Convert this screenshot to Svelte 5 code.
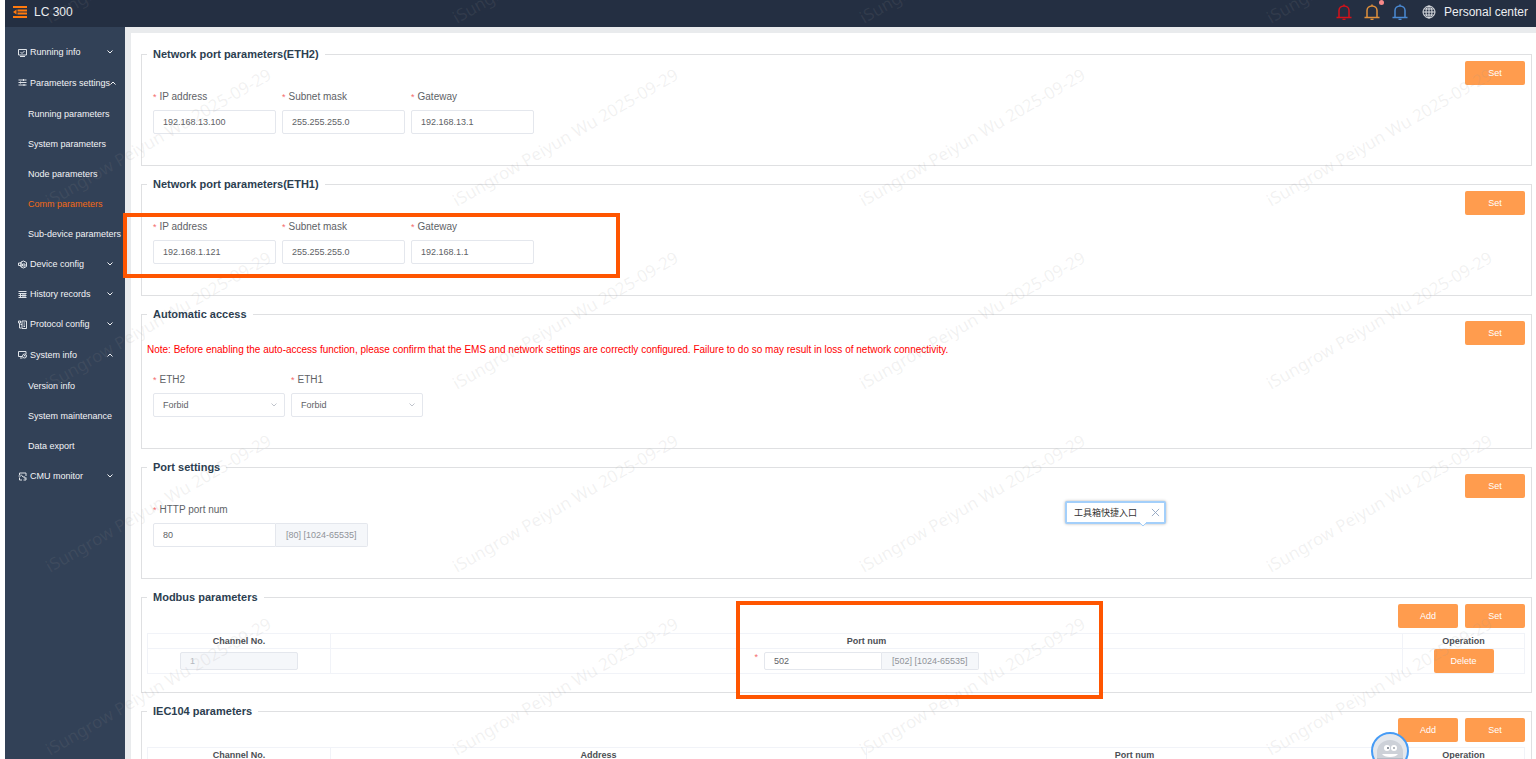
<script lang="ts">
	type Field = { id: string; label: string; value: string; hint?: string };
	type MenuItem = { label: string; icon: string; open?: boolean; children?: string[] };

	const ACTIVE = 'Comm parameters';

	const menu: MenuItem[] = [
		{ label: 'Running info', icon: 'monitor' },
		{
			label: 'Parameters settings',
			icon: 'sliders',
			open: true,
			children: [
				'Running parameters',
				'System parameters',
				'Node parameters',
				'Comm parameters',
				'Sub-device parameters',
			],
		},
		{ label: 'Device config', icon: 'device' },
		{ label: 'History records', icon: 'table' },
		{ label: 'Protocol config', icon: 'protocol' },
		{
			label: 'System info',
			icon: 'system',
			open: true,
			children: ['Version info', 'System maintenance', 'Data export'],
		},
		{ label: 'CMU monitor', icon: 'cmu' },
	];

	const bells = [
		{ name: 'Critical alarms', color: '#d4121a', dot: false },
		{ name: 'Minor alarms', color: '#e0913c', dot: true },
		{ name: 'Notices', color: '#4a8ad4', dot: false },
	];

	let eth2 = $state<Field[]>([
		{ id: 'eth2-ip', label: 'IP address', value: '192.168.13.100' },
		{ id: 'eth2-mask', label: 'Subnet mask', value: '255.255.255.0' },
		{ id: 'eth2-gw', label: 'Gateway', value: '192.168.13.1' },
	]);
	let eth1 = $state<Field[]>([
		{ id: 'eth1-ip', label: 'IP address', value: '192.168.1.121' },
		{ id: 'eth1-mask', label: 'Subnet mask', value: '255.255.255.0' },
		{ id: 'eth1-gw', label: 'Gateway', value: '192.168.1.1' },
	]);
	let http = $state<Field[]>([
		{ id: 'http-port', label: 'HTTP port num', value: '80', hint: '[80] [1024-65535]' },
	]);
	let modbusPort = $state('502');
	let tipOpen = $state(true);

	// Watermark grid
	const MARK = 'iSungrow Peiyun Wu 2025-09-29';
	const marks = [0, 1, 2, 3, 4].flatMap((r) =>
		[0, 1, 2, 3].map((c) => ({ x: 50 + c * 407, y: 24 + r * 183 })),
	);
</script>

{#snippet menuIcon(name: string)}
	<svg class="menu-icon" viewBox="0 0 18 18" aria-hidden="true">
		{#if name === 'monitor'}
			<path d="M1 3h16v11H1zM4 17h10M5 8l3 3 5-5" />
		{:else if name === 'sliders'}
			<path d="M1 4h16M1 9h16M1 14h16M11 2v4M5 7v4M12 12v4" />
		{:else if name === 'device'}
			<path d="M6 4l5-2 6 3v8l-6 3-5-2zM6 4v10M1 6h5M1 11h5M1 6v5M9 8h5v4H9z" />
		{:else if name === 'table'}
			<path d="M1 3h16M1 7h16M1 11h16M1 15h16M5 7v8M10 7v8M14 7v8" />
		{:else if name === 'protocol'}
			<path d="M8 2h9v15H8zM11 6h3M11 10h3M11 13h3M1 2h4v4H1zM3 6v10M3 16h4M5 9h3" />
		{:else if name === 'system'}
			<path d="M16 8V3H1v10h7M4 16h5" />
			<circle cx="13" cy="12" r="4" />
			<path d="M13 10v2h2" />
		{:else}
			<path d="M3 6V2h13v6M3 11v5h5M1 8h5M6 5l4 5M16 11v5h-5M10 10h4v4" />
		{/if}
	</svg>
{/snippet}

{#snippet chevron(up: boolean)}
	<svg class="chevron" class:up viewBox="0 0 12 8" aria-hidden="true">
		<path d="M1 1l5 5 5-5" />
	</svg>
{/snippet}

{#snippet actions(names: string[])}
	<div class="actions">
		{#each names as name}
			<button type="button" class="btn">{name}</button>
		{/each}
	</div>
{/snippet}

{#snippet fieldRow(fields: Field[])}
	<div class="row">
		{#each fields as field (field.id)}
			<div class="field">
				<label for={field.id}><span class="req">*</span>{field.label}</label>
				<div class="group">
					<input id={field.id} type="text" class:joined={field.hint} bind:value={field.value} />
					{#if field.hint}<span class="hint">{field.hint}</span>{/if}
				</div>
			</div>
		{/each}
	</div>
{/snippet}

<div class="page">
	<header>
		<button type="button" class="fold" aria-label="Collapse menu">
			<svg viewBox="0 0 28 24" aria-hidden="true">
				<path d="M0 2h28M9 9h19M9 15h19M0 22h28" />
				<path class="solid" d="M0 12l7-5v10z" />
			</svg>
		</button>
		<h1>LC 300</h1>
		<div class="tools">
			{#each bells as bell}
				<button type="button" class="bell" aria-label={bell.name}>
					<svg viewBox="0 0 32 32" style:stroke={bell.color} aria-hidden="true">
						<path d="M1 27h30M6 27V13c0-5 4-9 10-9s10 4 10 9v14M16 4V1M13 31h6" />
					</svg>
					{#if bell.dot}<span class="dot"></span>{/if}
				</button>
			{/each}
			<svg class="globe" viewBox="0 0 28 28" aria-hidden="true">
				<circle cx="14" cy="14" r="12" />
				<ellipse cx="14" cy="14" rx="6" ry="12" />
				<path d="M2 14h24M14 2v24M4 8h20M4 20h20" />
			</svg>
			<a href="#personal">Personal center</a>
		</div>
	</header>

	<div class="body">
		<nav>
			<ul>
				{#each menu as item}
					<li>
						<button type="button" class="menu-item" class:open={item.open}>
							{@render menuIcon(item.icon)}
							<span>{item.label}</span>
							{@render chevron(!!item.open)}
						</button>
						{#if item.open && item.children}
							<ul class="submenu">
								{#each item.children as child}
									<li><a href="#menu" class="sub" class:active={child === ACTIVE}>{child}</a></li>
								{/each}
							</ul>
						{/if}
					</li>
				{/each}
			</ul>
		</nav>

		<main>
			<div class="panel">
				<fieldset>
					<legend>Network port parameters(ETH2)</legend>
					{@render actions(['Set'])}
					{@render fieldRow(eth2)}
				</fieldset>

				<fieldset>
					<legend>Network port parameters(ETH1)</legend>
					{@render actions(['Set'])}
					{@render fieldRow(eth1)}
				</fieldset>

				<fieldset>
					<legend>Automatic access</legend>
					{@render actions(['Set'])}
					<p class="note">
						Note: Before enabling the auto-access function, please confirm that the EMS and network
						settings are correctly configured. Failure to do so may result in loss of network
						connectivity.
					</p>
					<div class="row">
						{#each ['ETH2', 'ETH1'] as port}
							<div class="field">
								<label for="auto-{port}"><span class="req">*</span>{port}</label>
								<div class="select">
									<select id="auto-{port}">
										<option>Forbid</option>
										<option>Allow</option>
									</select>
									{@render chevron(false)}
								</div>
							</div>
						{/each}
					</div>
				</fieldset>

				<fieldset>
					<legend>Port settings</legend>
					{@render actions(['Set'])}
					{@render fieldRow(http)}
				</fieldset>

				<fieldset class="with-table">
					<legend>Modbus parameters</legend>
					{@render actions(['Add', 'Set'])}
					<table>
						<thead>
							<tr>
								<th class="channel">Channel No.</th>
								<th>Port num</th>
								<th class="operation">Operation</th>
							</tr>
						</thead>
						<tbody>
							<tr>
								<td><input type="text" class="small" value="1" aria-label="Channel No." disabled /></td>
								<td>
									<div class="group centered">
										<span class="req">*</span>
										<input
											type="text"
											class="small joined"
											aria-label="Port num"
											bind:value={modbusPort}
										/>
										<span class="hint small">[502] [1024-65535]</span>
									</div>
								</td>
								<td><button type="button" class="btn">Delete</button></td>
							</tr>
						</tbody>
					</table>
				</fieldset>

				<fieldset class="with-table">
					<legend>IEC104 parameters</legend>
					{@render actions(['Add', 'Set'])}
					<table>
						<thead>
							<tr>
								<th class="channel">Channel No.</th>
								<th>Address</th>
								<th>Port num</th>
								<th class="operation">Operation</th>
							</tr>
						</thead>
					</table>
				</fieldset>
			</div>
		</main>
	</div>

	<svg class="watermark" aria-hidden="true">
		{#each marks as m}
			<text transform="translate({m.x} {m.y}) rotate(-30)">{MARK}</text>
		{/each}
	</svg>

	<div class="frame frame-eth1"></div>
	<div class="frame frame-modbus"></div>

	{#if tipOpen}
		<div class="tip">
			<span>工具箱快捷入口</span>
			<button type="button" aria-label="Close" onclick={() => (tipOpen = false)}>
				<svg viewBox="0 0 10 10" aria-hidden="true"><path d="M1 1l8 8M9 1l-8 8" /></svg>
			</button>
			<svg class="tip-arrow" viewBox="0 0 8 5" aria-hidden="true"><path d="M0 0l4 4 4-4" /></svg>
		</div>
	{/if}

	<button type="button" class="robot" aria-label="Assistant">
		<svg viewBox="0 0 38 38" aria-hidden="true">
			<circle cx="19" cy="19" r="18" fill="#e4e7ec" stroke="#469bf5" stroke-width="2" />
			<path d="M6 29V20a13 12 0 0 1 26 0v9z" fill="#cdd1d8" />
			<path d="M6 26h26v4a16 16 0 0 1-26 0z" fill="#b3bbc6" />
			<circle cx="16" cy="16" r="3" fill="#fff" />
			<circle cx="23" cy="16" r="3" fill="#fff" />
			<circle cx="17" cy="16" r="1" fill="#6d7480" />
			<path d="M22 16h2" stroke="#6d7480" />
			<path d="M11 22h16q-2 3-8 3t-8-3z" fill="#fff" />
		</svg>
	</button>
</div>

<style>
	:global(body) {
		background: #fff;
	}

	.page {
		position: relative;
		display: flex;
		flex-direction: column;
		height: 100vh;
		padding-left: 5px;
		box-sizing: border-box;
		overflow: hidden;
		font-family: 'Liberation Sans', Arial, 'Noto Sans CJK SC', sans-serif;
		font-size: 9px;
		color: #606266;
	}

	button,
	input,
	select {
		font: inherit;
		box-sizing: border-box;
		margin: 0;
	}

	button {
		border: 0;
		padding: 0;
		background: none;
		color: inherit;
		cursor: pointer;
	}

	a {
		color: inherit;
		text-decoration: none;
	}

	ul {
		list-style: none;
		margin: 0;
		padding: 0;
	}

	svg {
		display: block;
		fill: none;
	}

	header {
		flex: none;
		display: flex;
		align-items: center;
		height: 27px;
		box-sizing: border-box;
		padding: 0 8px 3px;
		background: #242f42;
		color: #eceef1;
		font-size: 12px;
	}

	.fold svg {
		width: 14px;
		height: 12px;
		stroke: #ff7a0e;
		stroke-width: 4;
	}

	.fold .solid {
		fill: #ff7a0e;
		stroke: none;
	}

	h1 {
		margin: 0 0 0 7px;
		font-size: 12px;
		font-weight: 400;
	}

	.tools {
		display: flex;
		align-items: center;
		margin-left: auto;
	}

	.bell {
		position: relative;
		margin-right: 12px;
	}

	.bell svg {
		width: 16px;
		height: 16px;
		stroke-width: 3;
	}

	.dot {
		position: absolute;
		top: -4px;
		right: -4px;
		width: 5px;
		height: 5px;
		border-radius: 50%;
		background: #f78989;
	}

	.globe {
		width: 14px;
		height: 14px;
		margin: 0 8px 0 2px;
		stroke: #dfe2e6;
		stroke-width: 2;
	}

	.body {
		flex: 1;
		display: flex;
		min-height: 0;
	}

	nav {
		flex: none;
		width: 120px;
		padding-top: 10px;
		background: #324157;
		color: #f2f4f6;
	}

	.menu-item {
		display: flex;
		align-items: center;
		width: 100%;
		height: 30px;
		padding: 0 12px 0 13px;
		white-space: nowrap;
	}

	.menu-item.open {
		height: 31px;
	}

	.submenu {
		padding-top: 1px;
	}

	.menu-icon {
		flex: none;
		width: 9px;
		height: 9px;
		margin-right: 3px;
		stroke: #dfe3e8;
		stroke-width: 2;
	}

	.chevron {
		flex: none;
		width: 6px;
		height: 4px;
		margin-left: auto;
		stroke: currentColor;
		stroke-width: 2;
	}

	.chevron.up {
		transform: rotate(180deg);
	}

	.sub {
		display: block;
		padding-left: 23px;
		line-height: 30px;
		white-space: nowrap;
	}

	.sub.active {
		color: #f56a14;
	}

	main {
		flex: 1;
		min-width: 0;
		padding: 6px 0 0 6px;
		background: #e9ebed;
	}

	.panel {
		display: flex;
		flex-direction: column;
		gap: 11px;
		padding: 14px 4px 0 10px;
		background: #fff;
	}

	fieldset {
		min-width: 0;
		margin: 0;
		padding: 0 6px 31px 5px;
		border: 1px solid #dfe0e2;
	}

	.with-table {
		padding-bottom: 18px;
	}

	legend {
		padding: 0 6px;
		font-size: 11px;
		line-height: 14px;
		font-weight: 700;
		color: #2c3e50;
	}

	.actions {
		display: flex;
		justify-content: flex-end;
		gap: 7px;
	}

	.btn {
		width: 60px;
		height: 24px;
		border-radius: 2px;
		background: #ff9c4e;
		color: #fff;
	}

	.row {
		display: flex;
		gap: 6px;
		padding: 5px 6px 0;
	}

	.field {
		display: flex;
		flex-direction: column;
		gap: 6px;
	}

	label {
		font-size: 10px;
		line-height: 14px;
	}

	.req {
		margin-right: 3px;
		font-size: 9px;
		color: #f56c6c;
	}

	.group {
		display: flex;
	}

	input,
	select {
		width: 123px;
		height: 24px;
		padding: 0 9px;
		border: 1px solid #e4e7ed;
		border-radius: 2px;
		background: #fff;
		color: #606266;
	}

	input.joined {
		border-radius: 2px 0 0 2px;
	}

	.hint {
		box-sizing: border-box;
		height: 24px;
		padding: 0 10px;
		border: 1px solid #e4e7ed;
		border-left: 0;
		border-radius: 0 2px 2px 0;
		background: #f5f7fa;
		color: #909399;
		line-height: 22px;
		white-space: nowrap;
	}

	input.small {
		width: 118px;
		height: 18px;
	}

	.hint.small {
		height: 18px;
		line-height: 16px;
	}

	input:disabled {
		background: #f5f7fa;
		color: #b4b8bf;
	}

	.select {
		display: grid;
		align-items: center;
	}

	.select > :global(*) {
		grid-area: 1 / 1;
	}

	select {
		appearance: none;
		width: 132px;
	}

	.select .chevron {
		margin-right: 8px;
		stroke: #c0c4cc;
		pointer-events: none;
	}

	.note {
		margin: 0 0 13px;
		font-size: 10px;
		line-height: 10px;
		color: #f00;
	}

	table {
		width: 100%;
		margin-top: 5px;
		border-collapse: collapse;
		table-layout: fixed;
	}

	th,
	td {
		height: 24px;
		padding: 0;
		border: 1px solid #f1f3f8;
		text-align: center;
		vertical-align: middle;
	}

	th {
		height: 14px;
		line-height: 14px;
		color: #4c4f54;
	}

	.channel {
		width: 182px;
	}

	.operation {
		width: 121px;
	}

	td .btn {
		display: block;
		margin: 0 auto;
	}

	.centered {
		justify-content: center;
	}

	.centered .req {
		margin-right: 6px;
	}

	.watermark {
		position: absolute;
		inset: 0;
		width: 100%;
		height: 100%;
		pointer-events: none;
	}

	.watermark text {
		font-family: 'Noto Sans', sans-serif;
		font-size: 17px;
		fill: rgba(150, 150, 150, 0.13);
	}

	.frame {
		position: absolute;
		box-sizing: border-box;
		border: 4px solid #ff5500;
		pointer-events: none;
	}

	.frame-eth1 {
		top: 213px;
		left: 123px;
		width: 497px;
		height: 65px;
	}

	.frame-modbus {
		top: 601px;
		left: 736px;
		width: 367px;
		height: 98px;
	}

	.tip {
		position: absolute;
		top: 501px;
		right: 370px;
		display: flex;
		align-items: center;
		justify-content: space-between;
		width: 101px;
		height: 23px;
		box-sizing: border-box;
		padding: 0 4px 0 7px;
		border: 2px solid #a3cffa;
		border-radius: 2px;
		background: #fff;
		box-shadow: 0 0 3px rgba(0, 0, 0, 0.3);
		color: #333;
	}

	.tip button svg {
		width: 9px;
		height: 9px;
		stroke: #8fa3bf;
	}

	.tip-arrow {
		position: absolute;
		right: 17px;
		bottom: -5px;
		width: 8px;
		height: 5px;
		fill: #fff;
		stroke: #a3cffa;
	}

	.robot {
		position: absolute;
		right: 127px;
		top: 732px;
	}

	.robot svg {
		width: 38px;
		height: 38px;
	}
</style>
